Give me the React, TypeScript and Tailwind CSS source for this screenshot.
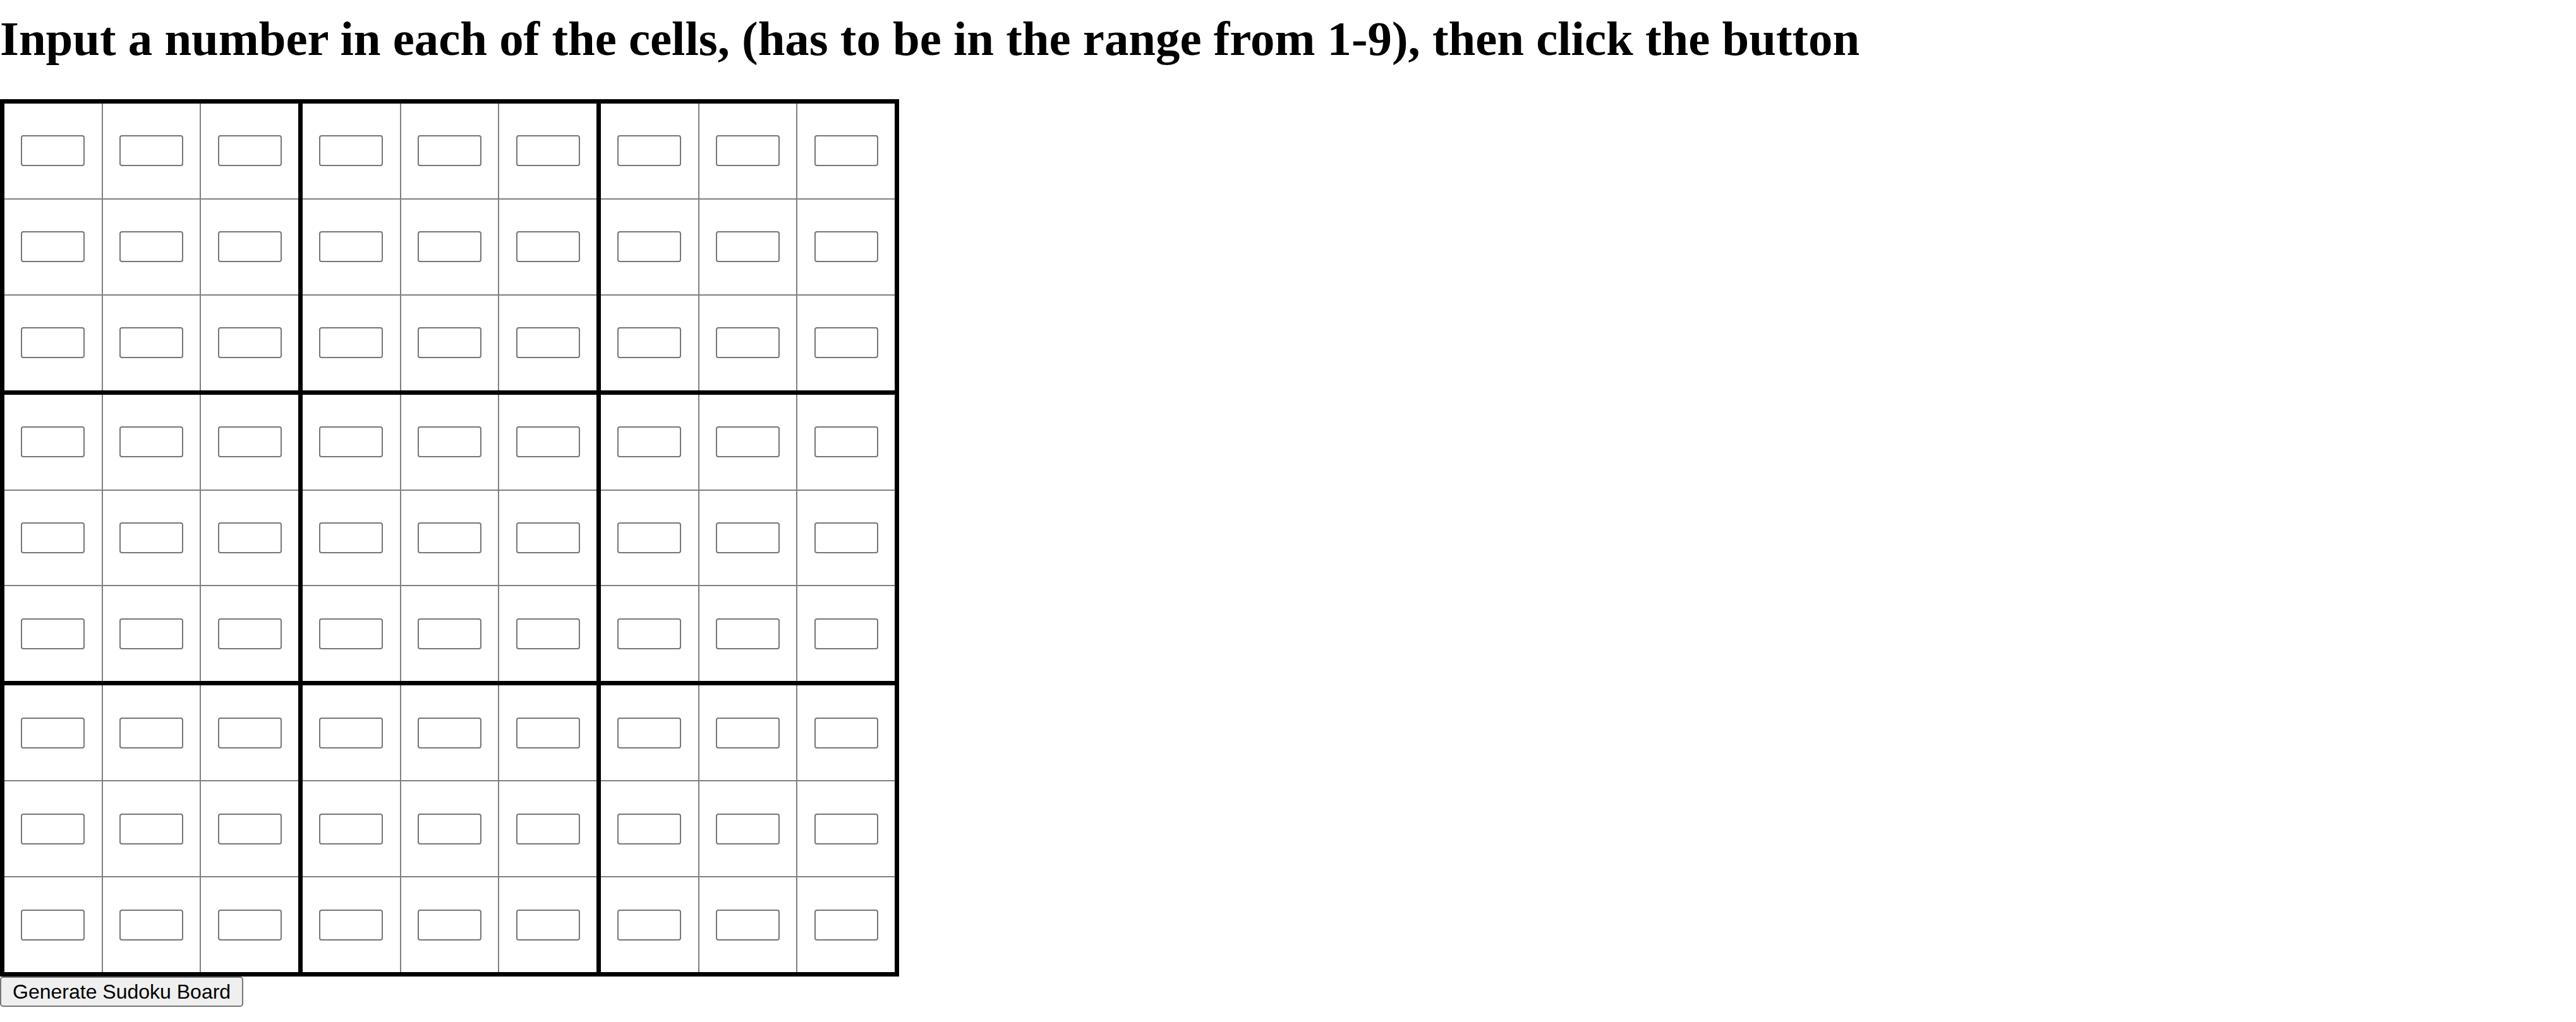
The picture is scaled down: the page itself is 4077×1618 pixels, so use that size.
const boxes = [0, 1, 2, 3, 4, 5, 6, 7, 8];
const cells = [0, 1, 2, 3, 4, 5, 6, 7, 8];

function Box({ box }: { box: number }) {
  return (
    <div className="grid grid-cols-3 gap-[2px] bg-[#808080]">
      {cells.map((c) => (
        <div key={c} className="flex h-[149.9px] w-[153.67px] items-center justify-center bg-white">
          <input
            type="text"
            aria-label={`cell ${box}-${c}`}
            className="h-[49px] w-[101px] rounded-[4px] border-2 border-[#767676] bg-white px-1 text-[31px] outline-none"
          />
        </div>
      ))}
    </div>
  );
}

export default function App() {
  return (
    <div className="min-h-screen bg-white text-black">
      <h1 className="mt-[19px] mb-[52px] text-[76.8px] leading-[86px] font-bold" style={{ fontFamily: '"Liberation Serif", "Times New Roman", serif' }}>
        Input a number in each of the cells, (has to be in the range from 1-9), then click the button
      </h1>

      <div className="inline-grid grid-cols-3 gap-[7px] border-[7px] border-black bg-black">
        {boxes.map((b) => (
          <Box key={b} box={b} />
        ))}
      </div>

      <div>
        <button
          type="button"
          className="h-[48px] rounded-[5px] border-2 border-[#767676] bg-[#efefef] px-[18px] text-[32px] leading-none text-black"
          style={{ fontFamily: '"Liberation Sans", Arial, sans-serif' }}
        >
          Generate Sudoku Board
        </button>
      </div>
    </div>
  );
}
